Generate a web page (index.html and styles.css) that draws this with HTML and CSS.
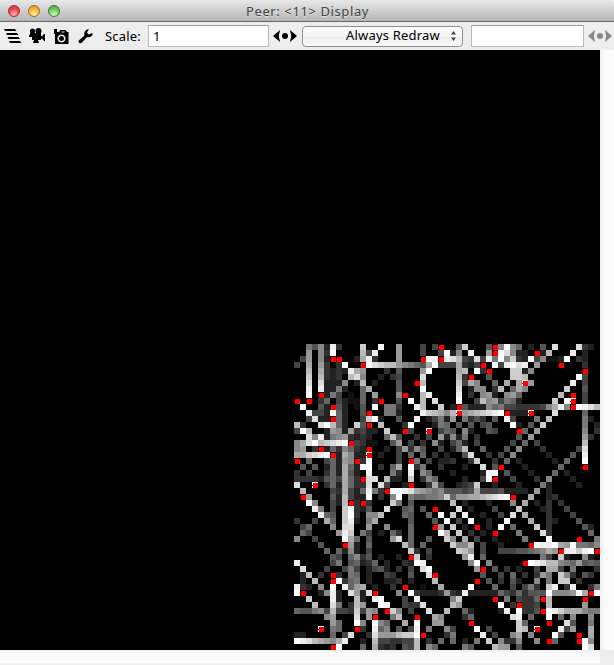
FILE: index.html
```html
<!DOCTYPE html>
<html lang="en">
<head>
<meta charset="utf-8">
<title>Peer: &lt;11&gt; Display</title>
<link rel="stylesheet" href="styles.css">
</head>
<body>
<div class="window">
  <header class="titlebar">
    <div class="lights"><i class="light red"></i><i class="light amber"></i><i class="light green"></i></div>
    <h1 class="title">Peer: &lt;11&gt; Display</h1>
  </header>
  <div class="toolbar">
    <svg class="icon layers" width="18" height="16" viewBox="0 0 18 16"><path d="M0 1h11l1.500 2H1zM2 5h11l1.500 2H3zM3.500 9h11l1.500 2H4.500zM5 13h11l1.500 2H6z"/></svg>
    <svg class="icon movie" width="16" height="16" viewBox="0 0 16 16"><circle cx="3.500" cy="3" r="2.600"/><circle cx="9.500" cy="3" r="3"/><path d="M1 5h11v2.500l1 1 2-2.500h1v7h-1l-2-2.500-1 .500V12H9l1 3H4l1-3H3V9H0V7h1z"/></svg>
    <svg class="icon camera" width="15" height="15" viewBox="0 0 15 15"><path fill-rule="evenodd" d="M0 0h3v3h2l1.500-2h5L13 3h1.500v12H1V5H0zM7.500 5.500a4 4 0 1 0 .01 0zM7.500 7a2.500 2.500 0 1 1-.01 0zM7.500 2.500v1h3v-1z"/></svg>
    <svg class="icon wrench" width="15" height="15" viewBox="0 0 15 15"><path d="M11 0 9 3.500 10.500 5.500 14.500 4C15 7 12 9 9 8L4 13.500C2 15.500-.5 13 1 11.200L6.500 6.500C5.500 3 8 .2 11 0z"/></svg>
    <label class="label">Scale:</label>
    <div class="field scale">1</div>
    <svg class="eye" width="24" height="14" viewBox="0 0 24 14"><path d="M0 7 7 1 5.800 7 7 13zM24 7 17 1 18.200 7 17 13z"/><circle cx="12" cy="7" r="3"/></svg>
    <div class="select"><span>Always Redraw</span><svg class="updown" width="7" height="10" viewBox="0 0 7 10"><path d="M3.500 0 6 3.500H1zM3.500 10 6 6.500H1z"/></svg></div>
    <div class="field blank"></div>
    <svg class="eye dim" width="24" height="14" viewBox="0 0 24 14"><path d="M0 7 7 1 5.800 7 7 13zM24 7 17 1 18.200 7 17 13z"/><circle cx="12" cy="7" r="3"/></svg>
  </div>
  <div class="scroller">
    <div class="view"><canvas id="field" width="306" height="306"></canvas></div>
    <div class="vtrack"></div>
    <div class="htrack"></div>
    <div class="corner"></div>
  </div>
</div>
<script src="field.js"></script>
</body>
</html>
```
FILE: styles.css
```css
* { box-sizing: border-box; }
body {
  margin: 0;
  background: #ededed;
  font: 13px/16px "Noto Sans", "Open Sans", sans-serif;
  color: #000;
}
.window { width: 614px; height: 665px; display: flex; flex-direction: column; overflow: hidden; }
.titlebar {
  height: 22px;
  flex: none;
  display: grid;
  grid-template-columns: 70px 1fr 70px;
  align-items: center;
  border-bottom: 1px solid #686868;
  border-radius: 4px 4px 0 0;
  background: linear-gradient(#e8e8e8, #cfcfcf 50%, #b5b5b5);
}
.lights { display: flex; gap: 8px; padding-left: 8px; }
.light { width: 12px; height: 12px; border-radius: 50%; border: 1px solid; }
.red { background: radial-gradient(circle at 50% 85%, #ffb5b5, #ed4950 55%, #c3333d); border-color: #9c3036; }
.amber { background: radial-gradient(circle at 50% 85%, #ffef9e, #f5b640 55%, #d68c25); border-color: #a16c27; }
.green { background: radial-gradient(circle at 50% 85%, #d5ffac, #70c763 55%, #419c3c); border-color: #3b7d34; }
.title { margin: 0; padding-left: 1px; text-align: center; font-size: 13px; font-weight: 400; line-height: 20px; letter-spacing: .6px; color: #444; text-shadow: 0 1px #dedede; }
.toolbar { height: 28px; flex: none; display: flex; align-items: center; padding-left: 4px; background: #ededed; }
.icon, .eye { flex: none; }
.movie { margin-left: 7px; }
.camera { margin-left: 9px; }
.wrench { margin-left: 9px; }
.label { width: 42px; margin-left: 12px; letter-spacing: .2px; white-space: nowrap; }
.field { height: 22px; border: 1px solid #b9b9b9; border-top-color: #9c9c9c; background: #fff; padding: 2px 4px; }
.scale { width: 121px; margin-left: 1px; }
.eye { margin-left: 4px; }
.select {
  width: 161px;
  height: 21px;
  margin-left: 5px;
  display: flex;
  align-items: center;
  justify-content: flex-end;
  gap: 10px;
  padding-right: 5px;
  border: 1px solid #8f8f8f;
  border-radius: 4px;
  background: linear-gradient(#fff, #f5f5f5 50%, #ececec 51%, #fbfbfb);
  letter-spacing: .2px;
}
.select span { position: relative; top: -1px; }
.updown { fill: #444; }
.blank { width: 113px; margin-left: 8px; }
.dim { fill: #888; }
.scroller { flex: 1; display: grid; grid-template: 600px 15px / 600px 14px; }
.view { background: #000; display: flex; align-items: flex-end; justify-content: flex-end; }
.view canvas { display: block; }
.vtrack { background: linear-gradient(90deg, #f1f1f1, #fafafa 4px, #fdfdfd); }
.htrack { background: linear-gradient(#eee, #fafafa 4px, #fdfdfd 13px, #eee 14px); }
.corner { background: #ededed; }
```
FILE: field.js
```js
// One string per row. Hex digit: trail brightness. R: agent, W: agent on a white patch.
const rows = [
  "..7582e3...c..f.. 9...4.4R..5c...5R 8f86.2.5.d...d32.",
  "..9.83f....b4e... 9...4..4f28.e..9R fd822.R2b...e.2..",
  ".49.82RR..2ae3... 9...RfeRedb43d4e7 f8c32f48112f.32..",
  "4.a.93.3f..Rfdcbb 98765af444a324R.f 4efde.9...R...3..",
  "..b.a3232ea9...3. 5...9f....ab.f3R. ..cc28........R..",
  "..c.b323.bd8..2.3 4...d.....b3R..5. ..ccb........f4..",
  "..d.d2228.2b.2... 5..Rb.....c4a8..6 .a.aW9......e.4..",
  "..e.e2272..6a.... 5...f.....d.288.3 b.6a8......c..5..",
  "..f.R274.1.6.9... 8R..be....e.3.892 .896......b.R.4..",
  "R.R.36.42116.3R.. 5.f.b.d...f..4b89 4762.....c.fW.4..",
  ".f..52R52.15.f.77 3..eb..c.2R522286 74433334 8ae8Rfedb",
  "..e442f62..5R..77 2...ecba8bW9abcde fR222W...d....6..",
  "..4d22R62..4cf2.. 5..e.2472 9.7353.5 .e4...7.b.....72.",
  "b3..dfb62.c5R.b.. .3f...276.5.5.45. ..f2.5.c......7.2",
  "4fb..29829342 2.c. .R4..W.465.82..54 ...R6.9.......8.3",
  "..d8e278932 32..6b 5..3.4.92827.3... ...5.9........93.",
  "8adfbcdefR4311..5 9.4.3.82.462.4... ..4.6.4.......b..",
  "89.3R26386 32R..2. 49385..4.26b..6.. .5.8...3.....4d..",
  "aacdefR2a822W.2.. 4.6.6.3.2..5d..3. 4.8.....2...5.e..",
  "R.6..46298R3f.... 4.R7.4.223..3c..3 .6.2.....2.6..f..",
  ".5.5.262a62ff.3.6 a.f37..3...2..d.5 R...2.....6...R..",
  "3.4..362a52.e...7 3.e.86...2....2ff .5...2...6.2.....",
  "333325 64a63Rdd.b2 2.c.386....2..4fR ..4...3.8...2....",
  "d..W.362a633d.d4. .2R..3a4..234c..2 ...2...72....2...",
  ".b....43a426e73Rf feda987855545a444 52222.9.2........",
  ".R9...52b422f.3.8 f.7667 78c699aabcd efR..a..23.......",
  "..f8..42bR3R3...c 7.5......b.2...2. ..8.a.2.3.3......",
  "...e7.4.cf325..d. .56.5.R...d.2...4 ...c...23..4.....",
  "....e65.cf3.88b.. .65..6.f.c.e..2.. 4.d.a...3...4....",
  "3..4.a6.ce2.7a... ..5...5.f.4.f..2. .f...a..32...5...",
  ".46...8.dd..9..8. ..6...R9.c.2.R.2. f.6...c.3.....52.",
  ".64....9ec.74.2.6 3.6....fb.c.3.2.R ...7...d3......6.",
  "8..4....fa6.5...9 d.6..5..c8.a.4..2 ....7...f....R..7",
  "....5...R92.6.... .b6.6....c8 8b.4.. 2....Rfeefa9f7768",
  ".....6.628 2.4.... ..c3.4....cb9.4.. 444556 78a9Reecef R",
  "......54.683 5.2.. 2.Rc.3.....9e.6.. .......74.c2..82.",
  "e.....47.562 36.2. .32fe.......8f.8. ....Rfedbb876 9565",
  ".d...4..474.2452. 3.4.df.......9R.5 .3.2..4.aa4.7...3",
  ".2b.3.R3.76.2..43 ..5..dR.......5.. 4.6.3.397.c83.53.",
  ".2.b..Rf367.2..22 3.2...b......R.5. 3.52..8.7.cc.3...",
  "e32.8.f.e69a.2..3 .R..1..a....f...6 ..4.473.ce.3e..37",
  "fR..28e2.d92dR... 8.f3222393 2e22222 643635 55f8889faRf",
  "..c...e2..b2.ef.. .4.e.....8c.....R .7.4336Rb.....R..",
  "...b..d7.3b9..fe. .433d....b9...... f.3R334.b.....9..",
  "65578 4b443c498.Rc 8.4..d..b..62.... 2e.f335Rfecaaa877",
  ".....89...d.9R..7 b..R..a8...36.... ..de.6..f.6.8..8.",
  "......96..f8.f86. .a.f..99....R.... ...c6...R..d5..7.",
  "....W.76..R3.e68. 5.4e.7..84...f.4. ...cb.W...e49..a.",
  "22....6.4d..3d999 bccfR...37....e.4 ..8a.8...f5..R.a.",
  "fedba98ae..2.b443 344b.3.6.6.2.7.c. 8338..8.R6...Rf8.",
  "......Rf...6.a323 .54b.86....75...b 99.5..........fd."
];

const CELL = 6;
const ctx = document.getElementById("field").getContext("2d");
ctx.fillStyle = "#000";
ctx.fillRect(0, 0, 306, 306);
rows.forEach((row, y) => {
  [...row.replace(/ /g, "")].forEach((c, x) => {
    const px = x * CELL, py = y * CELL;
    if (c === "R" || c === "W") {
      ctx.fillStyle = c === "W" ? "#fff" : "#180000";
      ctx.fillRect(px, py, CELL, CELL);
      ctx.fillStyle = "#f00";
      ctx.fillRect(px + 1, py + 1, 5, 5);
      ctx.fillStyle = "#a00";
      ctx.fillRect(px, py + 3, 1, 1);
    } else if (c !== ".") {
      const v = parseInt(c, 16) * 17;
      ctx.fillStyle = `rgb(${v},${v},${v})`;
      ctx.fillRect(px, py, CELL, CELL);
    }
  });
});
```
